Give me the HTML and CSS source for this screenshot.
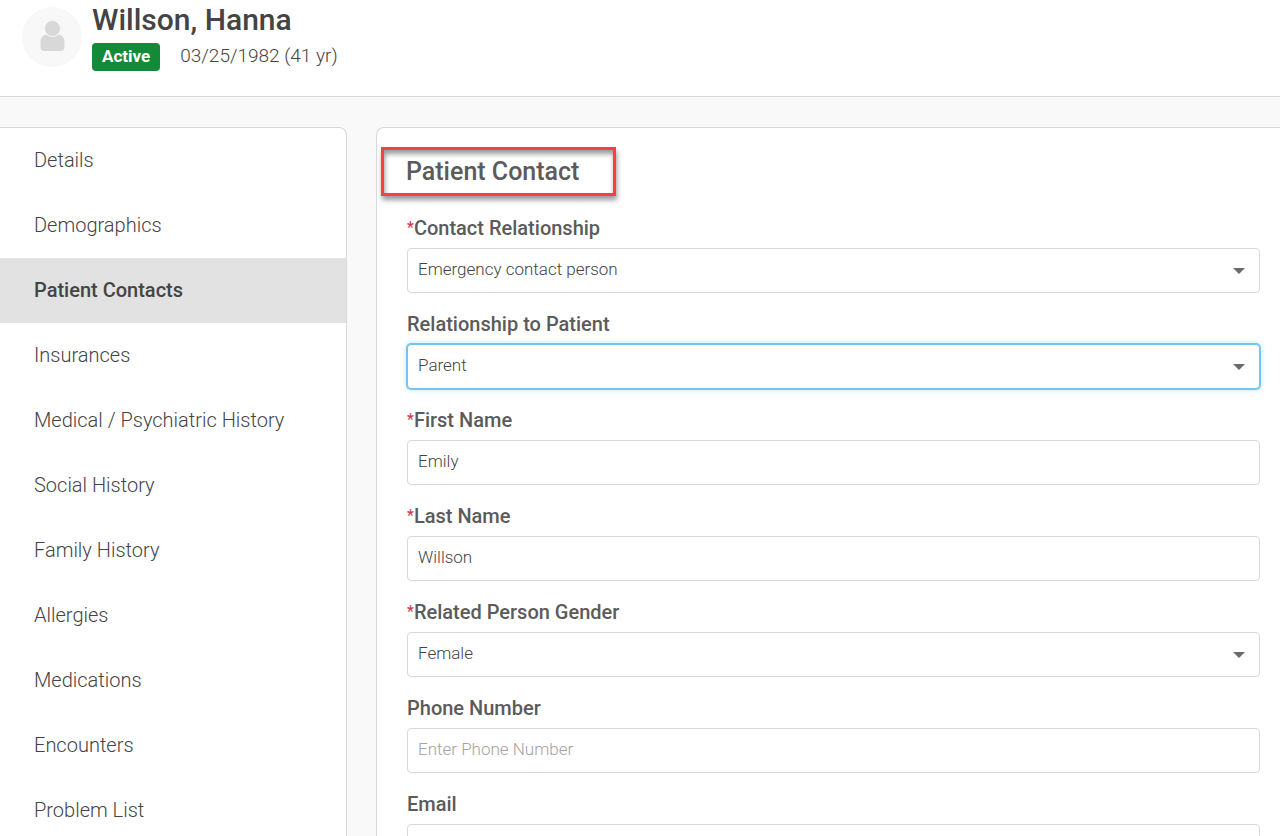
FILE: index.html
```html
<!DOCTYPE html>
<html lang="en">

<head>
    <meta charset="UTF-8">
    <meta name="viewport" content="width=device-width, initial-scale=1.0">
    <title>Patient Contact - Willson, Hanna</title>
    <link rel="stylesheet" href="styles.css">
</head>

<body>
    <header class="patient-header">
        <svg class="avatar" viewBox="0 0 60 60" aria-hidden="true">
            <circle cx="30" cy="30" r="30" fill="#f8f8f8" />
            <path d="M24 27.500C20.500 28.500 18.500 31 18.500 35V40Q18.500 44 22.500 44H38.500Q42.500 44 42.500 40V35C42.500 31 40.500 28.500 37 27.500Q30.500 32 24 27.500Z" fill="#d8d8d8" />
            <circle cx="30.500" cy="21.500" r="8" fill="#d8d8d8" stroke="#f8f8f8" stroke-width="1" />
        </svg>
        <div class="patient-info">
            <h1>Willson, Hanna</h1>
            <div class="patient-meta">
                <span class="badge">Active</span>
                <span class="birth-date">03/25/1982 (41 yr)</span>
            </div>
        </div>
    </header>

    <div class="layout">
        <nav class="sidebar" aria-label="Patient record">
            <a href="#details">Details</a>
            <a href="#demographics">Demographics</a>
            <a href="#contacts" class="active" aria-current="page">Patient Contacts</a>
            <a href="#insurances">Insurances</a>
            <a href="#medical-history">Medical / Psychiatric History</a>
            <a href="#social-history">Social History</a>
            <a href="#family-history">Family History</a>
            <a href="#allergies">Allergies</a>
            <a href="#medications">Medications</a>
            <a href="#encounters">Encounters</a>
            <a href="#problems">Problem List</a>
        </nav>

        <main class="panel">
            <h2 class="panel-title">Patient Contact</h2>
            <form>
                <div class="field">
                    <label for="contactRelationship"><span class="required">*</span>Contact Relationship</label>
                    <div class="select-wrapper">
                        <select id="contactRelationship" required>
                            <option>Emergency contact person</option>
                        </select>
                    </div>
                </div>
                <div class="field">
                    <label for="patientRelationship">Relationship to Patient</label>
                    <div class="select-wrapper">
                        <select id="patientRelationship" class="focused">
                            <option>Parent</option>
                        </select>
                    </div>
                </div>
                <div class="field">
                    <label for="firstName"><span class="required">*</span>First Name</label>
                    <input type="text" id="firstName" value="Emily" required>
                </div>
                <div class="field">
                    <label for="lastName"><span class="required">*</span>Last Name</label>
                    <input type="text" id="lastName" value="Willson" required>
                </div>
                <div class="field">
                    <label for="gender"><span class="required">*</span>Related Person Gender</label>
                    <div class="select-wrapper">
                        <select id="gender" required>
                            <option>Female</option>
                        </select>
                    </div>
                </div>
                <div class="field">
                    <label for="phone">Phone Number</label>
                    <input type="tel" id="phone" placeholder="Enter Phone Number">
                </div>
                <div class="field">
                    <label for="email">Email</label>
                    <input type="email" id="email">
                </div>
            </form>
        </main>
    </div>
</body>

</html>
```
FILE: styles.css
```css
* {
    margin: 0;
    padding: 0;
    box-sizing: border-box;
}

body {
    display: flex;
    flex-direction: column;
    height: 100vh;
    overflow: hidden;
    background: #f9f9f9;
    color: #444;
    font-family: "Proxima Nova", Roboto, Arial, sans-serif;
    font-size: 20px;
}

/* Patient header */
.patient-header {
    display: flex;
    flex-shrink: 0;
    gap: 10px;
    padding: 4px 22px 25px;
    background: #fff;
    border-bottom: 1px solid #d8d8d8;
}

.avatar {
    width: 60px;
    height: 60px;
    margin-top: 3px;
}

h1 {
    font-size: 30px;
    font-weight: 500;
    line-height: 32px;
    margin-bottom: 7px;
}

.patient-meta {
    display: flex;
    gap: 20px;
    height: 28px;
}

.badge {
    padding: 0 10px 2px;
    border-radius: 4px;
    background: #128a38;
    color: #fff;
    font-size: 17px;
    font-weight: bold;
    line-height: 26px;
}

.birth-date {
    font-size: 19px;
    font-weight: 300;
    line-height: 26px;
}

/* Sidebar and panel */
.layout {
    display: flex;
    flex: 1;
    gap: 29px;
    min-height: 0;
    padding-top: 30px;
}

.sidebar {
    flex: 0 0 347px;
    overflow: hidden;
    background: #fff;
    border: 1px solid #d8d8d8;
    border-width: 1px 1px 0 0;
    border-top-right-radius: 8px;
}

.sidebar a {
    display: block;
    padding: 0 34px;
    color: #444;
    line-height: 65px;
    font-weight: 300;
    text-decoration: none;
}

.sidebar a.active {
    background: #e2e2e2;
    font-weight: 500;
}

.panel {
    flex: 1;
    overflow: hidden;
    padding: 19px 20px 0 30px;
    background: #fff;
    border: 1px solid #d8d8d8;
    border-width: 1px 0 0 1px;
    border-top-left-radius: 8px;
}

.panel-title {
    width: 235px;
    margin: 0 0 20px -26px;
    padding-left: 22px;
    border: 3px solid #f93f42;
    box-shadow: 1px 4px 5px rgba(0, 0, 0, 0.4), inset 1px 4px 5px rgba(0, 0, 0, 0.4);
    color: #5b5b5b;
    font-size: 25px;
    font-weight: 500;
    line-height: 43px;
}

/* Form fields */
.field {
    margin-bottom: 19px;
}

.field label {
    display: block;
    margin-bottom: 8px;
    color: #5b5b5b;
    font-weight: 500;
    line-height: 24px;
}

.required {
    color: #d9304f;
    font-size: 16px;
    font-weight: 400;
    line-height: 1;
    vertical-align: 2px;
}

.field input,
.field select {
    display: block;
    width: 100%;
    height: 45px;
    padding: 0 10px 3px;
    appearance: none;
    background: #fff;
    border: 1px solid #d8d8d8;
    border-radius: 4px;
    color: #444;
    font-family: inherit;
    font-size: 17px;
    font-weight: 300;
}

.field input::placeholder {
    color: #a3a3a3;
}

.field input:focus,
.field select:focus,
.field select.focused {
    border-color: #73c5f1;
    box-shadow: 0 0 0 1px #73c5f1, 0 0 6px #a9dcf7;
    outline: none;
}

.select-wrapper {
    position: relative;
}

.select-wrapper::after {
    content: "";
    position: absolute;
    top: 20px;
    right: 15px;
    border: 6px solid transparent;
    border-top-color: #6b6b6b;
    border-bottom: none;
    pointer-events: none;
}
```
